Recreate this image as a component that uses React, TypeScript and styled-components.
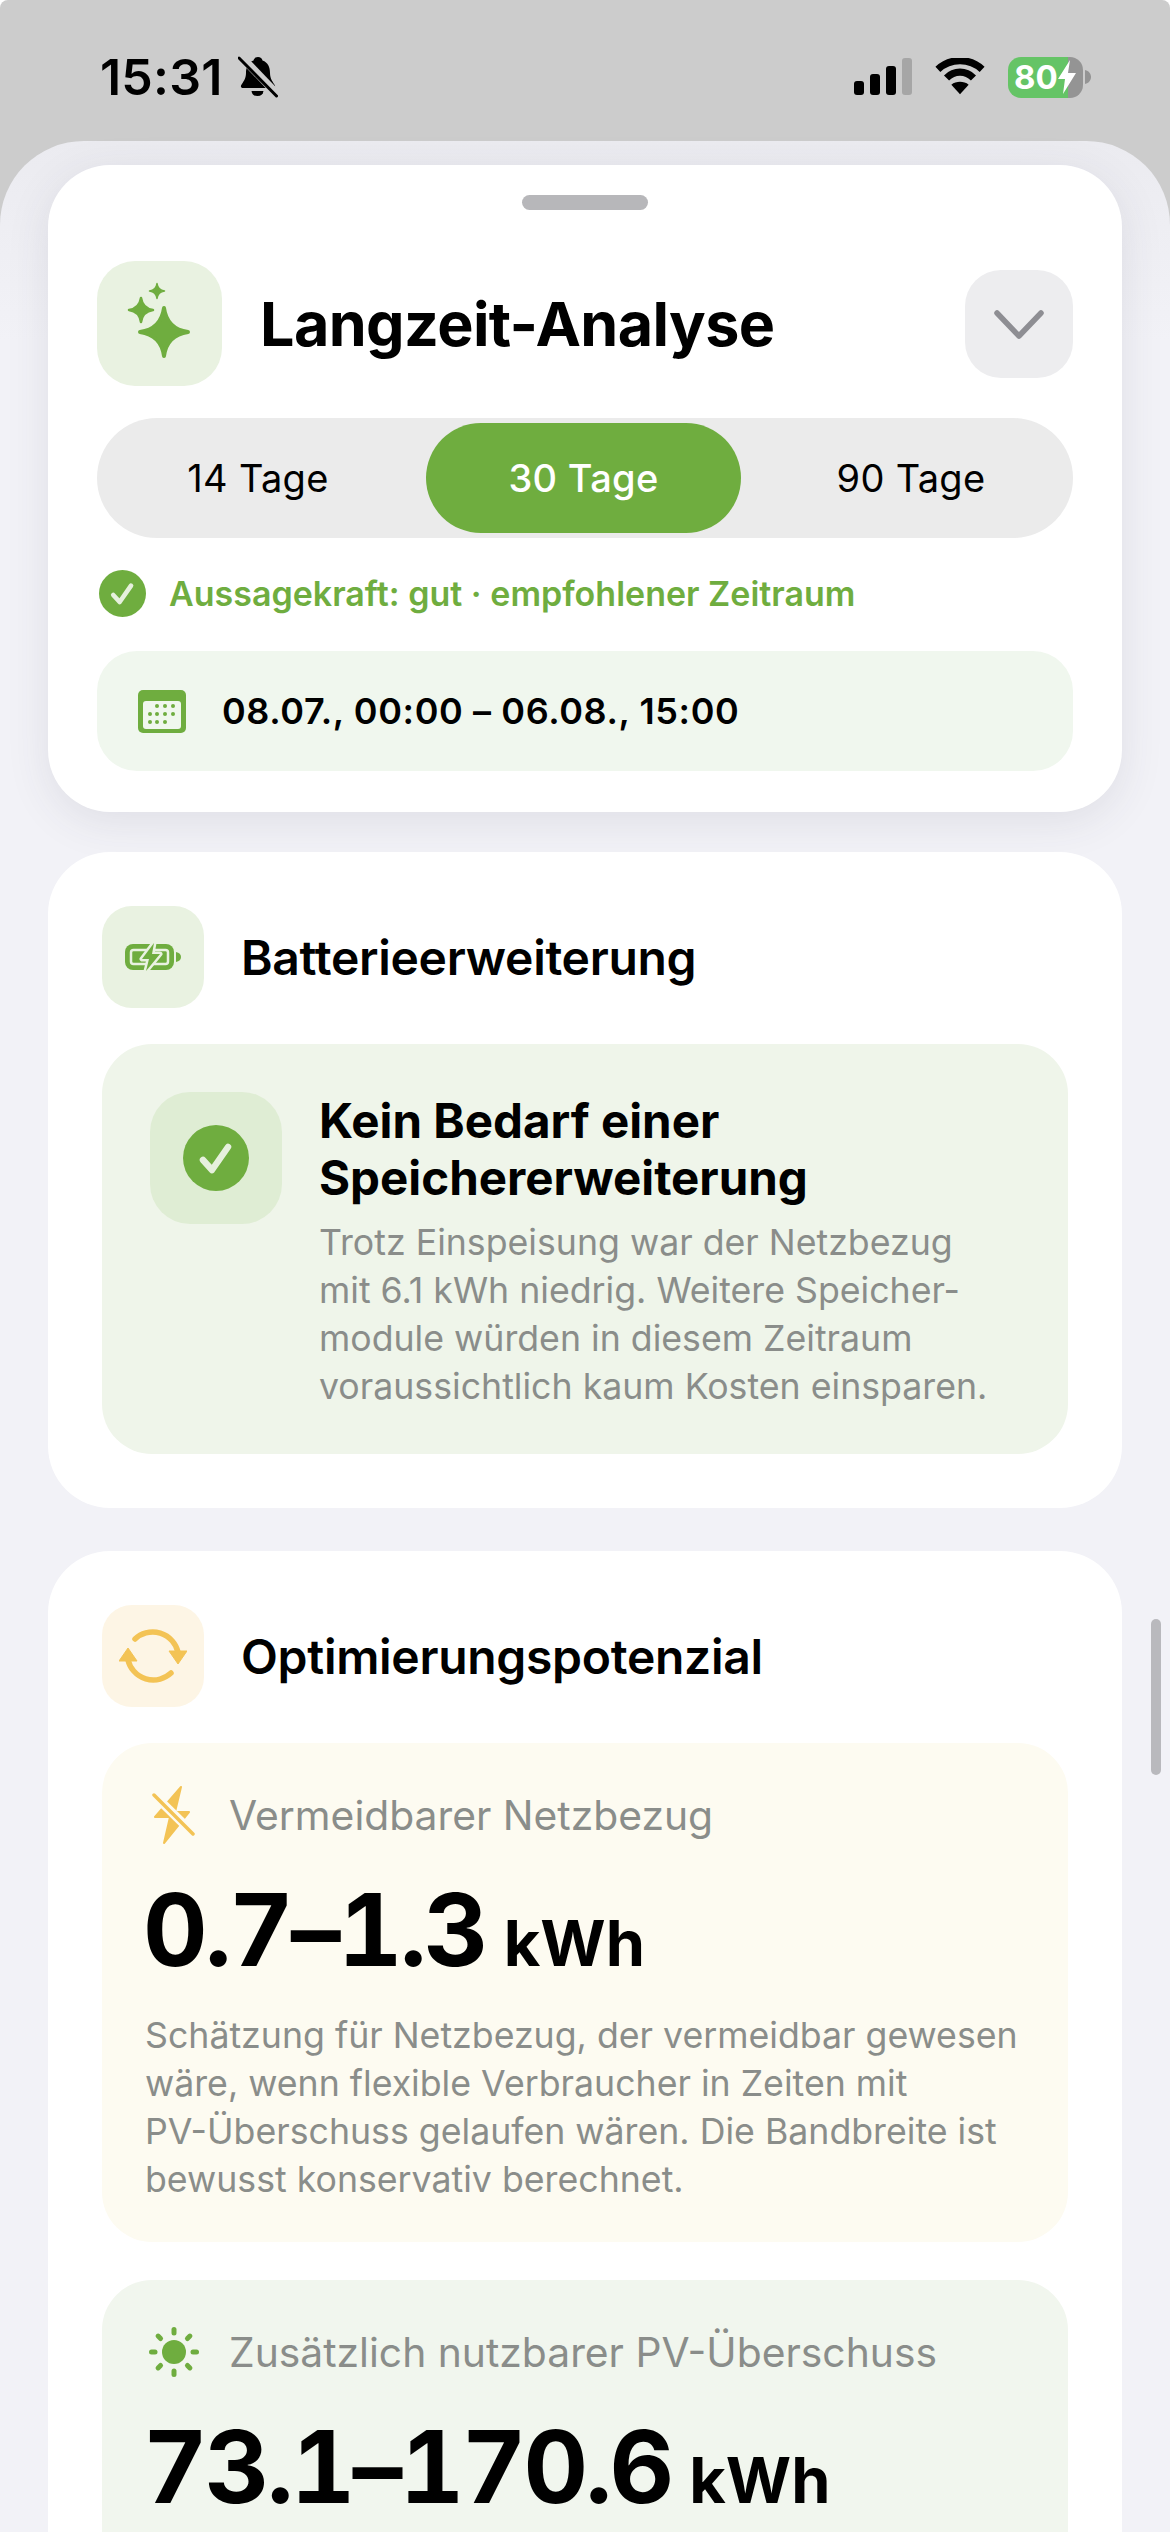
import React from "react";
import styled, { createGlobalStyle } from "styled-components";

const GREEN = "#6fad3f";
const AMBER = "#f3c355";

const GlobalStyle = createGlobalStyle`
  html, body {
    margin: 0;
    padding: 0;
    background: #fff;
  }
  * {
    box-sizing: border-box;
  }
`;

const Screen = styled.div`
  position: relative;
  width: 1170px;
  height: 2532px;
  overflow: hidden;
  background: #cccccc;
  border-radius: 8px 8px 0 0;
  font-family: Inter, "Liberation Sans", sans-serif;
  color: #000;
`;

const StatusBar = styled.div`
  height: 141px;
  display: flex;
  justify-content: space-between;
  align-items: flex-start;
  padding: 52px 79px 0 100px;
`;

const StatusGroup = styled.div`
  display: flex;
  align-items: center;
  gap: ${({ $gap }: { $gap: number }) => $gap}px;
  height: 50px;
`;

const Clock = styled.span`
  font-size: 50px;
  font-weight: 600;
  letter-spacing: 0.2px;
`;

const BatteryPill = styled.div`
  position: relative;
  width: 75px;
  height: 41px;
  border-radius: 13px;
  overflow: hidden;
  background: linear-gradient(to right, #65c466 0 80%, #949494 80% 100%);
  display: flex;
  align-items: center;
  padding-left: 6px;
  color: #fff;
  font-size: 33px;
  font-weight: 700;
`;

const BatteryRow = styled.div`
  display: flex;
  align-items: center;
  gap: 2px;
`;

const Sheet = styled.div`
  height: 2391px;
  background: #f2f2f7;
  background-image: linear-gradient(to bottom, #ebebf0 0, #f2f2f7 200px);
  border-radius: 84px 84px 0 0;
  padding: 24px 48px 0;
  display: flex;
  flex-direction: column;
`;

const Card = styled.section<{ $hero?: boolean }>`
  flex: none;
  background: #fff;
  border-radius: 62px;
  box-shadow: ${({ $hero }) => ($hero ? "0 10px 44px rgba(60, 60, 80, 0.1)" : "none")};
`;

const HeroCard = styled(Card)`
  height: 647px;
  padding: 30px 49px 0;
  margin-bottom: 40px;
  display: flex;
  flex-direction: column;
`;

const SectionCard = styled(Card)`
  padding: 54px 54px;
  margin-bottom: 43px;
`;

const Handle = styled.div`
  align-self: center;
  width: 126px;
  height: 15px;
  border-radius: 8px;
  background: #b7b7ba;
  margin-bottom: 51px;
`;

const HeroHeader = styled.div`
  display: flex;
  align-items: center;
  height: 125px;
  margin-bottom: 32px;
`;

const IconTile = styled.div<{ $size: number; $bg: string; $radius: number }>`
  flex: none;
  width: ${({ $size }) => $size}px;
  height: ${({ $size }) => $size}px;
  border-radius: ${({ $radius }) => $radius}px;
  background: ${({ $bg }) => $bg};
  display: flex;
  align-items: center;
  justify-content: center;
`;

const HeroTitle = styled.h1`
  flex: 1;
  margin: 0 0 0 38px;
  font-size: 61px;
  font-weight: 700;
  letter-spacing: -0.6px;
`;

const ChevronButton = styled.div`
  width: 108px;
  height: 108px;
  border-radius: 36px;
  background: #ededef;
  display: flex;
  align-items: center;
  justify-content: center;
`;

const Segments = styled.div`
  height: 120px;
  border-radius: 60px;
  background: #ebebeb;
  padding: 5px;
  display: grid;
  grid-template-columns: 324px 315px 1fr;
  margin-bottom: 32px;
`;

const Segment = styled.div<{ $active?: boolean }>`
  display: flex;
  align-items: center;
  justify-content: center;
  border-radius: 55px;
  font-size: 38px;
  font-weight: ${({ $active }) => ($active ? 500 : 400)};
  letter-spacing: 0.3px;
  color: ${({ $active }) => ($active ? "#fff" : "#000")};
  background: ${({ $active }) => ($active ? GREEN : "transparent")};
  &:first-child {
    padding-right: 12px;
  }
  &:last-child {
    padding-left: 13px;
  }
`;

const Verdict = styled.div`
  display: flex;
  align-items: center;
  gap: 23px;
  height: 47px;
  padding-left: 2px;
  margin-bottom: 34px;
  color: ${GREEN};
  font-size: 34px;
  font-weight: 600;
`;

const DateBox = styled.div`
  height: 120px;
  border-radius: 40px;
  background: #f0f7ee;
  display: flex;
  align-items: center;
  gap: 36px;
  padding-left: 41px;
  font-size: 36px;
  font-weight: 600;
  letter-spacing: 0.6px;
`;

const SectionHeader = styled.div`
  display: flex;
  align-items: center;
  gap: 37px;
  margin-bottom: 36px;
`;

const SectionTitle = styled.h2`
  margin: 0;
  font-size: 48px;
  font-weight: 600;
  letter-spacing: -0.3px;
`;

const Panel = styled.div<{ $bg: string }>`
  background: ${({ $bg }) => $bg};
  border-radius: 50px;
  padding: 48px 48px 44px;
`;

const MetricPanel = styled(Panel)`
  padding: 43px 30px 39px 43px;
  & + & {
    margin-top: 38px;
  }
`;

const AdviceRow = styled.div`
  display: flex;
  gap: 37px;
`;

const AdviceTitle = styled.div`
  font-size: 47.5px;
  font-weight: 700;
  line-height: 57px;
  margin-bottom: 12px;
`;

const BodyText = styled.p`
  margin: 0;
  font-size: 35.7px;
  line-height: 48px;
  color: #8a8d8a;
  white-space: nowrap;
`;

const MetricLabel = styled.div`
  display: flex;
  align-items: center;
  gap: 26px;
  height: 58px;
  font-size: 40.8px;
  color: #8a8d8a;
`;

const MetricIcon = styled.span`
  width: 58px;
  flex: none;
  display: flex;
  justify-content: center;
`;

const MetricValue = styled.div`
  display: flex;
  align-items: baseline;
  gap: 18px;
  margin: 26px 0 8px -2px;
  font-size: 100px;
  line-height: 120px;
  font-weight: 700;
  font-feature-settings: "tnum";
  letter-spacing: -2.8px;
`;

const MetricUnit = styled.span`
  font-size: 63px;
  letter-spacing: 0;
`;

const ScrollThumb = styled.div`
  position: absolute;
  left: 1151px;
  top: 1619px;
  width: 10px;
  height: 156px;
  border-radius: 5px;
  background: #b9b9bd;
`;

const star = (cx: number, cy: number, r: number) => {
  const k = r * 0.12;
  return `M${cx} ${cy - r}Q${cx + k} ${cy - k} ${cx + r} ${cy}Q${cx + k} ${cy + k} ${cx} ${cy + r}Q${cx - k} ${cy + k} ${cx - r} ${cy}Q${cx - k} ${cy - k} ${cx} ${cy - r}Z`;
};

const SparkleIcon = () => (
  <svg width="125" height="125" viewBox="0 0 125 125">
    <g fill={GREEN} stroke={GREEN} strokeLinejoin="round">
      <path d={star(67, 71, 24)} strokeWidth="4" />
      <path d={star(44, 49, 12)} strokeWidth="2.5" />
      <path d={star(60, 30, 7.5)} strokeWidth="1.5" />
    </g>
  </svg>
);

const Chevron = () => (
  <svg width="50" height="30" viewBox="0 0 50 30">
    <path d="M3 4 L25 27 L47 4" fill="none" stroke="#8e8e93" strokeWidth="5.5" strokeLinecap="round" strokeLinejoin="round" />
  </svg>
);

const CheckBadge = ({ size }: { size: number }) => (
  <svg width={size} height={size} viewBox="0 0 66 66">
    <circle cx="33" cy="33" r="33" fill={GREEN} />
    <path d="M20 35 L29 45 L45 22" fill="none" stroke="#e6f0dd" strokeWidth="6.5" strokeLinecap="round" strokeLinejoin="round" />
  </svg>
);

const CalendarIcon = () => (
  <svg width="48" height="43" viewBox="0 0 48 43">
    <rect width="48" height="43" rx="5" fill={GREEN} />
    <rect x="5" y="11" width="38" height="28" rx="3" fill="#f0f7ee" />
    {[
      [19, 16], [27, 16], [35, 16],
      [12, 24], [19, 24], [27, 24], [35, 24],
      [12, 32], [19, 32], [27, 32],
    ].map(([x, y]) => (
      <circle key={`${x}-${y}`} cx={x} cy={y} r="2" fill={GREEN} />
    ))}
  </svg>
);

const BatteryBoltIcon = () => (
  <svg width="56" height="30" viewBox="0 0 56 30">
    <rect x="0" y="2" width="49" height="26" rx="8" fill={GREEN} />
    <rect x="6" y="8" width="37" height="14" rx="2.5" fill="none" stroke="#e9f2e1" strokeWidth="2.5" />
    <path d="M29 1 L17 17 H24 L21 29 L35 12 H27 Z" fill={GREEN} stroke="#e9f2e1" strokeWidth="5" strokeLinejoin="round" />
    <path d="M29 1 L17 17 H24 L21 29 L35 12 H27 Z" fill={GREEN} />
    <path d="M51 10 Q56 11 56 15 Q56 19 51 20 Z" fill={GREEN} />
  </svg>
);

const SyncIcon = () => (
  <svg width="68" height="56" viewBox="0 0 68 56">
    <g fill="none" stroke={AMBER} strokeWidth="5.5" strokeLinecap="round">
      <path d="M16 11 A26 26 0 0 1 59 24" />
      <path d="M52 45 A26 26 0 0 1 9 32" />
    </g>
    <path d="M50 23 H68 L59 36 Z M0 33 H18 L9 20 Z" fill={AMBER} stroke={AMBER} strokeWidth="1" strokeLinejoin="round" />
  </svg>
);

const NoBoltIcon = () => (
  <svg width="44" height="58" viewBox="0 0 44 58">
    <path d="M29 1 L3 31 H18 L12 57 L37 26 H23 Z" fill={AMBER} stroke={AMBER} strokeWidth="2" strokeLinejoin="round" />
    <path d="M2 9 L42 48" stroke="#fdfbf1" strokeWidth="9" />
    <path d="M2 9 L41 48" stroke={AMBER} strokeWidth="3.5" strokeLinecap="round" />
  </svg>
);

const SunIcon = () => (
  <svg width="52" height="52" viewBox="0 0 52 52">
    <circle cx="26" cy="26" r="12" fill={GREEN} />
    {[0, 45, 90, 135, 180, 225, 270, 315].map((a) => (
      <rect key={a} x="23.5" y="1" width="5" height="8.5" rx="2.5" fill={GREEN} transform={`rotate(${a} 26 26)`} />
    ))}
  </svg>
);

const BellSlashIcon = () => (
  <svg width="40" height="42" viewBox="0 0 40 42">
    <path d="M20 1 C22.5 1 24 2.5 24.5 4.5 C30 6.5 32 11 32 17 C32 23 35 26 37 29.5 C37.5 31 36.5 32 35 32 H5 C3.5 32 2.5 31 3 29.5 C5 26 8 23 8 17 C8 11 10 6.5 15.5 4.5 C16 2.5 17.5 1 20 1 Z" fill="#000" />
    <path d="M13.5 35 H25.5 C25 38.5 23 40 19.5 40 C16 40 14 38.5 13.5 35 Z" fill="#000" />
    <path d="M2.5 0 L39 38" stroke="#cccccc" strokeWidth="8" />
    <path d="M1 2 L38.5 40" stroke="#000" strokeWidth="3" strokeLinecap="round" />
  </svg>
);

const SignalIcon = () => (
  <svg width="58" height="38" viewBox="0 0 58 38">
    <rect x="0" y="23" width="10" height="14" rx="3" fill="#000" />
    <rect x="16" y="16" width="10" height="21" rx="3" fill="#000" />
    <rect x="32" y="8" width="10" height="29" rx="3" fill="#000" />
    <rect x="48" y="0" width="10" height="37" rx="3" fill="#a6a6a6" />
  </svg>
);

const WifiIcon = () => (
  <svg width="50" height="38" viewBox="0 0 52 38">
    <g fill="none" stroke="#000" strokeWidth="7.5">
      <path d="M3 11 C16 -1 36 -1 49 11" />
      <path d="M12 20 C20 12 32 12 40 20" />
    </g>
    <path d="M17 27 C22 23 30 23 35 27 L26 37 Z" fill="#000" />
  </svg>
);

const BatteryCap = () => (
  <svg width="6" height="14" viewBox="0 0 6 14">
    <path d="M0 0 C4 1 6 4 6 7 C6 10 4 13 0 14 Z" fill="#949494" />
  </svg>
);

const ChargeBolt = () => (
  <svg width="18" height="34" viewBox="0 0 18 34">
    <path d="M12 0 L0 19 H7 L5 34 L18 13 H10 Z" fill="#fff" />
  </svg>
);

const App = () => {
  return (
    <Screen>
      <GlobalStyle />
      <StatusBar>
        <StatusGroup $gap={16}>
          <Clock>15:31</Clock>
          <BellSlashIcon />
        </StatusGroup>
        <StatusGroup $gap={23}>
          <SignalIcon />
          <WifiIcon />
          <BatteryRow>
            <BatteryPill>
              80
              <ChargeBolt />
            </BatteryPill>
            <BatteryCap />
          </BatteryRow>
        </StatusGroup>
      </StatusBar>

      <Sheet>
        <HeroCard $hero>
          <Handle />
          <HeroHeader>
            <IconTile $size={125} $bg="#e9f2e1" $radius={38}>
              <SparkleIcon />
            </IconTile>
            <HeroTitle>Langzeit-Analyse</HeroTitle>
            <ChevronButton>
              <Chevron />
            </ChevronButton>
          </HeroHeader>
          <Segments>
            <Segment>14 Tage</Segment>
            <Segment $active>30 Tage</Segment>
            <Segment>90 Tage</Segment>
          </Segments>
          <Verdict>
            <CheckBadge size={47} />
            Aussagekraft: gut · empfohlener Zeitraum
          </Verdict>
          <DateBox>
            <CalendarIcon />
            08.07., 00:00 – 06.08., 15:00
          </DateBox>
        </HeroCard>

        <SectionCard>
          <SectionHeader>
            <IconTile $size={102} $bg="#e9f2e1" $radius={30}>
              <BatteryBoltIcon />
            </IconTile>
            <SectionTitle>Batterieerweiterung</SectionTitle>
          </SectionHeader>
          <Panel $bg="#eff5ea">
            <AdviceRow>
              <IconTile $size={132} $bg="#dfedd4" $radius={40}>
                <CheckBadge size={66} />
              </IconTile>
              <div>
                <AdviceTitle>
                  Kein Bedarf einer
                  <br />
                  Speichererweiterung
                </AdviceTitle>
                <BodyText>
                  Trotz Einspeisung war der Netzbezug
                  <br />
                  mit 6.1 kWh niedrig. Weitere Speicher-
                  <br />
                  module würden in diesem Zeitraum
                  <br />
                  voraussichtlich kaum Kosten einsparen.
                </BodyText>
              </div>
            </AdviceRow>
          </Panel>
        </SectionCard>

        <SectionCard>
          <SectionHeader>
            <IconTile $size={102} $bg="#fdf5e5" $radius={30}>
              <SyncIcon />
            </IconTile>
            <SectionTitle>Optimierungspotenzial</SectionTitle>
          </SectionHeader>
          <MetricPanel $bg="#fdfbf1">
            <MetricLabel>
              <MetricIcon>
                <NoBoltIcon />
              </MetricIcon>
              Vermeidbarer Netzbezug
            </MetricLabel>
            <MetricValue>
              0.7–1.3 <MetricUnit>kWh</MetricUnit>
            </MetricValue>
            <BodyText>
              Schätzung für Netzbezug, der vermeidbar gewesen
              <br />
              wäre, wenn flexible Verbraucher in Zeiten mit
              <br />
              PV-Überschuss gelaufen wären. Die Bandbreite ist
              <br />
              bewusst konservativ berechnet.
            </BodyText>
          </MetricPanel>
          <MetricPanel $bg="#f1f6ee">
            <MetricLabel>
              <MetricIcon>
                <SunIcon />
              </MetricIcon>
              Zusätzlich nutzbarer PV-Überschuss
            </MetricLabel>
            <MetricValue>
              73.1–170.6 <MetricUnit>kWh</MetricUnit>
            </MetricValue>
          </MetricPanel>
        </SectionCard>
      </Sheet>
      <ScrollThumb />
    </Screen>
  );
};

export default App;
